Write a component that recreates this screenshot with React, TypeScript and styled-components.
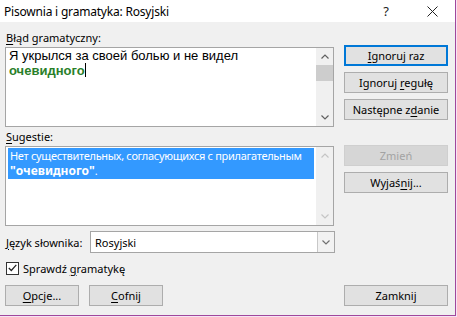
import styled, { createGlobalStyle } from 'styled-components'

const GlobalStyle = createGlobalStyle`
  html, body {
    margin: 0;
    padding: 0;
    background: #f6e3f4;
  }
  body {
    font-family: "Noto Sans", "Liberation Sans", sans-serif;
    font-size: 11px;
    color: #000;
  }
`

const Window = styled.div`
  width: 455px;
  height: 315px;
  background: #f0f0f0;
  border-right: 1px solid #a0479c;
  border-bottom: 1px solid #a0479c;
  display: flex;
  flex-direction: column;
`

const TitleBar = styled.div`
  height: 22px;
  background: #fff;
  display: flex;
  align-items: center;
  padding-left: 4px;
  font-size: 12px;
  letter-spacing: -0.2px;
`

const Title = styled.div`
  flex: 1;
`

const TitleButton = styled.div`
  width: 46px;
  height: 22px;
  display: flex;
  align-items: center;
  justify-content: center;
  font-size: 13px;
  color: #222;
`

const Body = styled.div`
  flex: 1;
  display: flex;
  flex-direction: column;
  padding: 9px 0 0 5px;
`

const Section = styled.div<{ $mt?: number }>`
  display: grid;
  grid-template-columns: 329px 104px;
  column-gap: 10px;
  margin-top: ${(p) => p.$mt ?? 0}px;
`

const LeftCol = styled.div`
  display: flex;
  flex-direction: column;
`

const RightCol = styled.div<{ $pt: number }>`
  display: flex;
  flex-direction: column;
  gap: 6px;
  padding-top: ${(p) => p.$pt}px;
`

const Label = styled.div`
  height: 16px;
  line-height: 14px;
  padding-left: 1px;
`

const Key = styled.span`
  text-decoration: underline;
  text-underline-offset: 2px;
`

const Box = styled.div`
  height: 78px;
  background: #fff;
  border: 1px solid #a5a5a5;
  display: flex;
`

const BoxContent = styled.div<{ $pt?: number }>`
  flex: 1;
  padding: ${(p) => p.$pt ?? 0}px 2px 0 2px;
  overflow: hidden;
`

const ErrorText = styled.div`
  font-family: "Liberation Sans", Arial, sans-serif;
  font-size: 13px;
  line-height: 15px;
  padding-left: 1px;
`

const Wrong = styled.span`
  color: #2a7f2a;
  font-weight: bold;
`

const Caret = styled.span`
  display: inline-block;
  width: 1px;
  height: 14px;
  background: #000;
  vertical-align: -2px;
`

const Highlight = styled.div`
  background: #3399ff;
  color: #fff;
  padding: 0 2px 1px 2px;
  line-height: 15px;
  white-space: nowrap;
  letter-spacing: -0.3px;
`

const Quoted = styled.span`
  font-weight: bold;
  font-size: 12px;
  letter-spacing: 0;
`

const Scrollbar = styled.div`
  width: 17px;
  background: #f0f0f0;
  display: flex;
  flex-direction: column;
`

const ScrollArrow = styled.div<{ $disabled?: boolean }>`
  height: 17px;
  display: flex;
  align-items: center;
  justify-content: center;
  color: ${(p) => (p.$disabled ? '#c5c5c5' : '#606060')};
`

const ScrollTrack = styled.div`
  flex: 1;
  display: flex;
  flex-direction: column;
`

const Thumb = styled.div`
  height: 16px;
  background: #cdcdcd;
`

const Button = styled.div<{ $default?: boolean; $disabled?: boolean }>`
  height: ${(p) => (p.$default ? 17 : 19)}px;
  border: ${(p) => (p.$default ? '2px solid #0078d7' : '1px solid #adadad')};
  background: ${(p) => (p.$disabled ? '#d6d6d6' : '#e1e1e1')};
  border-color: ${(p) => (p.$disabled ? '#cfcfcf' : undefined)};
  color: ${(p) => (p.$disabled ? '#a3a3a3' : '#000')};
  display: flex;
  align-items: center;
  justify-content: center;
  width: ${(p) => (p.$default ? 100 : 102)}px;
`

const WideButton = styled(Button)`
  width: 72px;
`

const CloseButton = styled(Button)`
  margin-right: 7px;
`

const ComboRow = styled.div`
  display: flex;
  align-items: center;
  margin-top: 5px;
  height: 22px;
`

const ComboLabel = styled.div`
  width: 84px;
  padding-left: 1px;
`

const Combo = styled.div`
  width: 243px;
  height: 20px;
  background: #fff;
  border: 1px solid #a5a5a5;
  display: flex;
`

const ComboValue = styled.div`
  flex: 1;
  display: flex;
  align-items: center;
  padding-left: 4px;
`

const ComboArrow = styled.div`
  width: 16px;
  border-left: 1px solid #c8c8c8;
  background: #f2f2f2;
  display: flex;
  align-items: center;
  justify-content: center;
  color: #707070;
`

const CheckRow = styled.div`
  display: flex;
  align-items: center;
  gap: 4px;
  margin-top: 8px;
  height: 14px;
  padding-left: 1px;
`

const CheckBox = styled.div`
  width: 11px;
  height: 11px;
  border: 1px solid #333;
  background: #fff;
  display: flex;
  align-items: center;
  justify-content: center;
`

const BottomRow = styled.div`
  display: flex;
  align-items: center;
  margin-top: 10px;
  gap: 10px;
`

const Spacer = styled.div`
  flex: 1;
`

const Chevron = ({ down }: { down?: boolean }) => (
  <svg width="8" height="5" viewBox="0 0 8 5">
    <path
      d={down ? 'M0.5 0.5 L4 4 L7.5 0.5' : 'M0.5 4.5 L4 1 L7.5 4.5'}
      fill="none"
      stroke="currentColor"
      strokeWidth="1.2"
    />
  </svg>
)

export default function App() {
  return (
    <>
      <GlobalStyle />
      <Window>
        <TitleBar>
          <Title>Pisownia i gramatyka: Rosyjski</Title>
          <TitleButton>?</TitleButton>
          <TitleButton>
            <svg width="11" height="11" viewBox="0 0 11 11">
              <path d="M0.5 0.5 L10.5 10.5 M10.5 0.5 L0.5 10.5" stroke="#222" strokeWidth="1" />
            </svg>
          </TitleButton>
        </TitleBar>
        <Body>
          <Section>
            <LeftCol>
              <Label>
                <Key>B</Key>łąd gramatyczny:
              </Label>
              <Box>
                <BoxContent>
                  <ErrorText>
                    Я укрылся за своей болью и не видел
                    <br />
                    <Wrong>очевидного</Wrong>
                    <Caret />
                  </ErrorText>
                </BoxContent>
                <Scrollbar>
                  <ScrollArrow>
                    <Chevron />
                  </ScrollArrow>
                  <ScrollTrack>
                    <Thumb />
                  </ScrollTrack>
                  <ScrollArrow>
                    <Chevron down />
                  </ScrollArrow>
                </Scrollbar>
              </Box>
            </LeftCol>
            <RightCol $pt={14}>
              <Button $default>
                <span>
                  <Key>I</Key>gnoruj raz
                </span>
              </Button>
              <Button>
                <span>
                  Ignoruj <Key>r</Key>egułę
                </span>
              </Button>
              <Button>
                <span>
                  Następne z<Key>d</Key>anie
                </span>
              </Button>
            </RightCol>
          </Section>
          <Section $mt={3}>
            <LeftCol>
              <Label>
                <Key>S</Key>ugestie:
              </Label>
              <Box>
                <BoxContent $pt={1}>
                  <Highlight>
                    Нет существительных, согласующихся с прилагательным
                    <br />
                    <Quoted>"очевидного"</Quoted>.
                  </Highlight>
                </BoxContent>
                <Scrollbar>
                  <ScrollArrow $disabled>
                    <Chevron />
                  </ScrollArrow>
                  <ScrollTrack />
                  <ScrollArrow $disabled>
                    <Chevron down />
                  </ScrollArrow>
                </Scrollbar>
              </Box>
            </LeftCol>
            <RightCol $pt={15}>
              <Button $disabled>Zmień</Button>
              <Button>
                <span>
                  Wyjaś<Key>n</Key>ij...
                </span>
              </Button>
            </RightCol>
          </Section>
          <ComboRow>
            <ComboLabel>
              <Key>J</Key>ęzyk słownika:
            </ComboLabel>
            <Combo>
              <ComboValue>Rosyjski</ComboValue>
              <ComboArrow>
                <Chevron down />
              </ComboArrow>
            </Combo>
          </ComboRow>
          <CheckRow>
            <CheckBox>
              <svg width="9" height="8" viewBox="0 0 9 8">
                <path d="M0.8 4 L3.3 6.5 L8.3 0.8" fill="none" stroke="#222" strokeWidth="1.2" />
              </svg>
            </CheckBox>
            <span>
              Sprawdź <Key>g</Key>ramatykę
            </span>
          </CheckRow>
          <BottomRow>
            <WideButton>
              <span>
                <Key>O</Key>pcje...
              </span>
            </WideButton>
            <WideButton>
              <span>
                <Key>C</Key>ofnij
              </span>
            </WideButton>
            <Spacer />
            <CloseButton>Zamknij</CloseButton>
          </BottomRow>
        </Body>
      </Window>
    </>
  )
}
